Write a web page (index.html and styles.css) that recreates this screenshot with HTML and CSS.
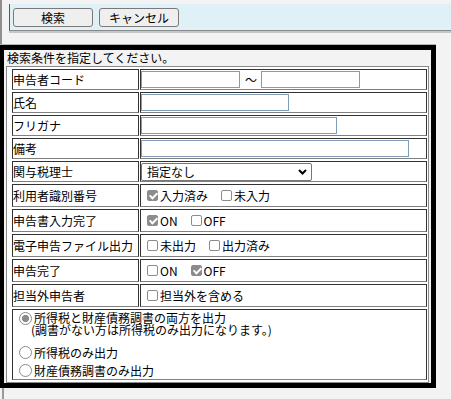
FILE: index.html
```html
<!DOCTYPE html>
<html lang="ja">
<head>
<meta charset="utf-8">
<title>検索条件</title>
<link rel="stylesheet" href="styles.css">
</head>
<body>
<div class="head">
  <div class="toolbar">
    <button class="btn" type="button">検索</button>
    <button class="btn" type="button">キャンセル</button>
  </div>
</div>
<div class="panel">
  <div class="caption">検索条件を指定してください。</div>
  <div class="grid">
    <div class="lbl">申告者コード</div>
    <div class="val"><input class="txt w99" type="text"><span class="tilde">～</span><input class="txt w99" type="text"></div>

    <div class="lbl">氏名</div>
    <div class="val"><input class="txt w148" type="text"></div>

    <div class="lbl">フリガナ</div>
    <div class="val"><input class="txt w196" type="text"></div>

    <div class="lbl">備考</div>
    <div class="val"><input class="txt w268" type="text"></div>

    <div class="lbl">関与税理士</div>
    <div class="val">
      <div class="select"><span>指定なし</span><svg class="chev" width="9" height="6" viewBox="0 0 9 6"><polyline points="1,1 4.5,4.5 8,1" fill="none" stroke="#000" stroke-width="2"/></svg></div>
    </div>

    <div class="lbl">利用者識別番号</div>
    <div class="val"><label class="opt"><span class="cb on"></span>入力済み</label><label class="opt"><span class="cb"></span>未入力</label></div>

    <div class="lbl">申告書入力完了</div>
    <div class="val"><label class="opt"><span class="cb on"></span>ON</label><label class="opt"><span class="cb"></span>OFF</label></div>

    <div class="lbl">電子申告ファイル出力</div>
    <div class="val"><label class="opt"><span class="cb"></span>未出力</label><label class="opt"><span class="cb"></span>出力済み</label></div>

    <div class="lbl">申告完了</div>
    <div class="val"><label class="opt"><span class="cb"></span>ON</label><label class="opt"><span class="cb on"></span>OFF</label></div>

    <div class="lbl">担当外申告者</div>
    <div class="val"><label class="opt"><span class="cb"></span>担当外を含める</label></div>

    <div class="radios">
      <label class="rline r1"><span class="rb on"></span><span class="rtext">所得税と財産債務調書の両方を出力<br>(調書がない方は所得税のみ出力になります。)</span></label>
      <label class="rline r3"><span class="rb"></span>所得税のみ出力</label>
      <label class="rline r4"><span class="rb"></span>財産債務調書のみ出力</label>
    </div>
  </div>
</div>
<div class="foot"></div>
</body>
</html>
```
FILE: styles.css
```css
* { box-sizing: border-box; }
html, body { margin: 0; padding: 0; }
body {
  background: #f3f3f3;
  font-family: "Noto Sans CJK JP", "Noto Sans", sans-serif;
  font-size: 12px;
  color: #000;
  width: 451px;
  height: 399px;
  overflow: hidden;
}
.head {
  height: 45px;
  border-left: 2px solid #8f8f8f;
  padding-top: 4px;
}
.toolbar {
  margin-left: 7px;
  height: 27px;
  display: flex;
  gap: 6px;
  padding: 4px 0 3px 3px;
  background: #dff0f7;
  border-left: 1px solid #2e6e53;
  border-bottom: 1px solid #8a8a8a;
  box-shadow: 0 2px 0 #c6c6c6;
}
.btn {
  width: 80px;
  height: 19px;
  padding: 0;
  border: 1px solid #7a7a7a;
  border-radius: 3px;
  background: #efefef;
  font-family: inherit;
  font-size: 12px;
  line-height: 17px;
  color: #000;
}
.panel {
  width: 436px;
  border-style: solid;
  border-color: #000;
  border-width: 5px 5px 5px 4px;
  box-shadow: 0 -1px 0 #b4b4b4;
  background: #f3f3f3;
}
.caption {
  height: 16px;
  line-height: 16px;
  padding-left: 3px;
}
.grid {
  margin: 0 2px;
  border: 1px solid #8a8a8a;
  background: #fff;
  padding: 2px 1px 2px 5px;
  display: grid;
  grid-template-columns: 127px 287px;
  grid-template-rows: repeat(5, 21px) repeat(5, 23px) 71px;
  column-gap: 1px;
  row-gap: 2px;
}
.lbl, .val, .radios {
  border: 1px solid;
  border-color: #333 #333 #808080 #333;
  background: #fff;
}
.lbl {
  display: flex;
  align-items: center;
  line-height: 14px;
  white-space: nowrap;
}
.val {
  display: flex;
  align-items: center;
  line-height: 14px;
  white-space: nowrap;
}
.txt {
  height: 17px;
  padding: 0 2px;
  border: 1px solid #7f9db9;
  border-radius: 0;
  background: #fff;
  font-family: inherit;
  font-size: 12px;
}
.w99 { width: 99px; }
.w148 { width: 148px; }
.w196 { width: 196px; }
.w268 { width: 268px; }
.tilde { margin: 0 4px 0 5px; width: 12px; }
.select {
  width: 171px;
  height: 18px;
  border: 1px solid #767676;
  border-radius: 2px;
  background: #fff;
  display: flex;
  align-items: center;
  justify-content: space-between;
  padding: 0 4px 0 5px;
}
.chev { display: block; }
.opt {
  display: flex;
  align-items: center;
  margin-right: 7px;
}
.cb {
  position: relative;
  width: 11px;
  height: 11px;
  margin: 0 2px 0 6px;
  border: 1px solid #8c8c8c;
  border-radius: 2px;
  background: #fff;
  flex: none;
}
.cb.on { background: #8c8c8c; }
.cb.on::after {
  content: "";
  position: absolute;
  left: 3px;
  top: 0;
  width: 3px;
  height: 6px;
  border: solid #fff;
  border-width: 0 2px 2px 0;
  transform: rotate(45deg);
}
.radios {
  grid-column: 1 / -1;
  padding: 2px 0 0 6px;
  display: flex;
  flex-direction: column;
}
.rline {
  display: flex;
  align-items: center;
  white-space: nowrap;
}
.r1 { align-items: flex-start; height: 24px; }
.rtext {
  display: block;
  line-height: 12px;
  margin-left: -3px;
  text-indent: 3px;
}
.r3 { height: 19px; margin-top: 7px; }
.r4 { height: 17px; }
.rb {
  width: 13px;
  height: 13px;
  margin-right: 2px;
  border: 1px solid #8c8c8c;
  border-radius: 50%;
  background: #fff;
  flex: none;
}
.rb.on {
  background: radial-gradient(circle, #8c8c8c 0 3.3px, #fff 3.9px);
}
.foot {
  margin-left: 2px;
  height: 20px;
  border-left: 2px solid #9a9a9a;
}
```
